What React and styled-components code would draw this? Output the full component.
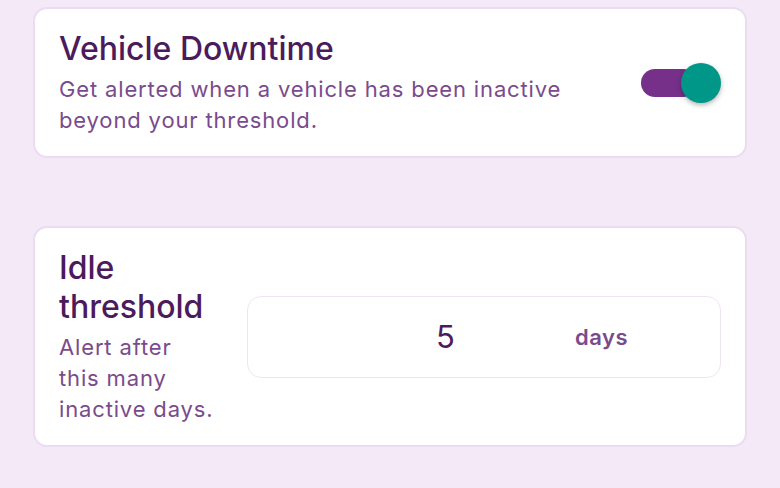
import React, { useState } from "react";
import styled, { createGlobalStyle } from "styled-components";

const Global = createGlobalStyle`
  html, body { margin: 0; padding: 0; background: #f3e9f7; }
  body { font-family: Inter, "Noto Sans", sans-serif; -webkit-font-smoothing: antialiased; }
  * { box-sizing: border-box; }
`;

const Page = styled.div`
  padding: 7px 33px 40px;
  display: flex;
  flex-direction: column;
  gap: 68px;
`;

const Card = styled.section`
  background: #ffffff;
  border: 2px solid #ecdcf1;
  border-radius: 14px;
  padding: 20px 24px 20px 24px;
  display: flex;
  align-items: center;
  gap: ${(p) => p.$gap || 24}px;
`;

const TextCol = styled.div`
  flex: ${(p) => (p.$width ? `0 0 ${p.$width}px` : "1")};
  display: flex;
  flex-direction: column;
`;

const Title = styled.h2`
  margin: 0;
  font-size: 32px;
  font-weight: 500;
  line-height: 39px;
  color: #4b1b5c;
`;

const Desc = styled.p`
  margin: 6px 0 0;
  font-size: 22px;
  letter-spacing: 0.85px;
  line-height: 31px;
  color: #7a4b8c;
  max-width: 520px;
`;

const Track = styled.button`
  position: relative;
  width: 56px;
  height: 28px;
  border: none;
  border-radius: 14px;
  background: #76308a;
  padding: 0;
  margin-right: 24px;
  cursor: pointer;
  flex: 0 0 auto;
`;

const Thumb = styled.span`
  position: absolute;
  top: 50%;
  left: ${(p) => (p.$on ? 40 : -16)}px;
  width: 40px;
  height: 40px;
  margin-top: -20px;
  border-radius: 50%;
  background: #009688;
  box-shadow: 0 2px 5px rgba(0, 0, 0, 0.3);
`;

const InputBox = styled.label`
  flex: 1;
  min-width: 0;
  height: 82px;
  border: 1.5px solid #f0e4f4;
  border-radius: 14px;
  display: flex;
  align-items: center;
  padding-right: 92px;
`;

const NumberInput = styled.input`
  flex: 1;
  width: 0;
  min-width: 0;
  border: none;
  outline: none;
  background: transparent;
  font-family: Inter, "Noto Sans", sans-serif;
  font-size: 31px;
  color: #4b1b5c;
  text-align: center;
  padding: 0 0 0 80px;
`;

const Suffix = styled.span`
  margin-left: 12px;
  font-size: 22px;
  font-weight: 600;
  letter-spacing: 0.5px;
  color: #7a4b8c;
`;

export default function App() {
  const [on, setOn] = useState(true);
  const [days, setDays] = useState("5");
  return (
    <>
      <Global />
      <Page>
        <Card>
          <TextCol>
            <Title>Vehicle Downtime</Title>
            <Desc>Get alerted when a vehicle has been inactive beyond your threshold.</Desc>
          </TextCol>
          <Track aria-label="Vehicle Downtime" onClick={() => setOn(!on)}>
            <Thumb $on={on} />
          </Track>
        </Card>
        <Card $gap={28}>
          <TextCol $width={160}>
            <Title>Idle threshold</Title>
            <Desc>Alert after this many inactive days.</Desc>
          </TextCol>
          <InputBox>
            <NumberInput value={days} onChange={(e) => setDays(e.target.value)} />
            <Suffix>days</Suffix>
          </InputBox>
        </Card>
      </Page>
    </>
  );
}
